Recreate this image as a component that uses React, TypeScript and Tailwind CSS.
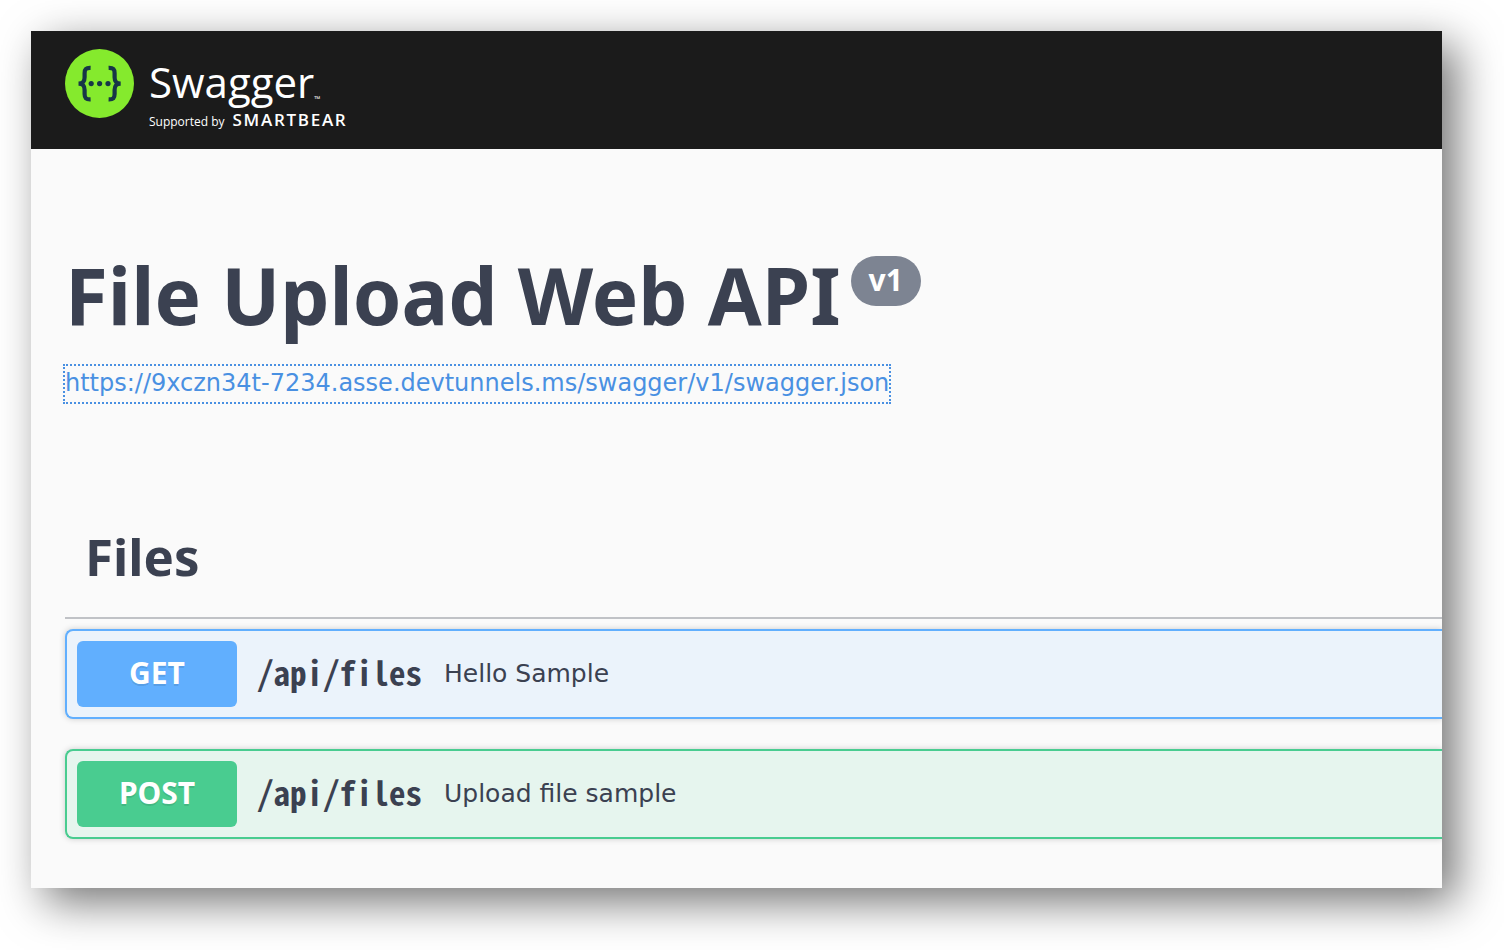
import React from "react";

type Operation = {
  method: string;
  path: string;
  summary: string;
  row: string;
  badge: string;
};

const operations: Operation[] = [
  {
    method: "GET",
    path: "/api/files",
    summary: "Hello Sample",
    row: "border-[#61affe] bg-[#ebf3fb]",
    badge: "bg-[#61affe]",
  },
  {
    method: "POST",
    path: "/api/files",
    summary: "Upload file sample",
    row: "border-[#49cc90] bg-[#e6f5ee]",
    badge: "bg-[#49cc90]",
  },
];

function LogoMark() {
  return (
    <svg className="size-[69px] shrink-0" viewBox="0 0 69 69" aria-hidden="true">
      <circle cx="34.5" cy="34.5" r="34.5" fill="#85ea2d" />
      <g fill="none" stroke="#173647" strokeWidth="4.2">
        <path d="M25.6 18.9 C20.8 18.7 19.6 20.4 19.6 24.2 V28.2 C19.6 32.4 18.3 34.4 13.6 34.6 C18.3 34.8 19.6 36.8 19.6 41 V45 C19.6 48.8 20.8 50.5 25.6 50.3" />
        <path d="M43.6 18.9 C48.4 18.7 49.6 20.4 49.6 24.2 V28.2 C49.6 32.4 50.9 34.4 55.6 34.6 C50.9 34.8 49.6 36.8 49.6 41 V45 C49.6 48.8 48.4 50.5 43.6 50.3" />
      </g>
      <g fill="#173647">
        <circle cx="26.2" cy="34.6" r="2.6" />
        <circle cx="34.6" cy="34.6" r="2.6" />
        <circle cx="43" cy="34.6" r="2.6" />
      </g>
    </svg>
  );
}

function Header() {
  return (
    <header className="bg-[#1b1b1b] px-[34px] pt-[18px] pb-4">
      <a href="#" className="flex w-fit items-start gap-[15px] font-['Open_Sans',sans-serif] text-white">
        <LogoMark />
        <span className="flex flex-col pt-2">
          <span className="flex items-end text-[42px] leading-[50px]">
            Swagger
            <span className="pb-1 text-[8px] leading-[8px]">™</span>
          </span>
          <span className="flex items-baseline gap-2 pt-[2px] leading-[22px]">
            <span className="text-[12px]">Supported by</span>
            <span className="text-[17px] font-semibold tracking-widest">SMARTBEAR</span>
          </span>
        </span>
      </a>
    </header>
  );
}

function OperationRow({ method, path, summary, row, badge }: Operation) {
  return (
    <button
      type="button"
      className={`flex w-full items-center rounded-l-lg border-2 border-r-0 p-[10px] text-left shadow-[0_0_6px_rgba(0,0,0,0.19)] ${row}`}
    >
      <span
        className={`w-40 rounded-md pb-[2px] text-center text-[30px] leading-[64px] font-bold text-white [text-shadow:0_2px_0_rgba(0,0,0,0.1)] ${badge}`}
      >
        {method}
      </span>
      <span className="pr-[22px] pb-1 pl-5 font-['Noto_Sans_CJK_JP',monospace] text-[33px] leading-10 font-bold [font-feature-settings:'hwid'] [font-variant-ligatures:none]">
        {path}
      </span>
      <span className="font-['DejaVu_Sans',sans-serif] text-[25px] leading-10">{summary}</span>
    </button>
  );
}

export default function App() {
  return (
    <div className="min-h-screen overflow-hidden bg-white pt-[31px] pr-[62px] pb-[62px] pl-[31px] font-['Noto_Sans',sans-serif] text-[#3b4151]">
      <div className="shadow-[14px_14px_42px_rgba(0,0,0,0.55)]">
        <div className="overflow-hidden bg-[#fafafa]">
          <Header />
          <main className="pt-[98px] pb-[49px] pl-[34px]">
            <div className="flex items-start gap-[10px]">
              <h1 className="pb-1 text-[78px] leading-[96px] font-bold">File Upload Web API</h1>
              <span className="mt-[9px] rounded-full bg-[#7d8492] px-[18px] pb-[2px] text-[30px] leading-[48px] font-bold text-white">
                v1
              </span>
            </div>
            <a
              href="https://9xczn34t-7234.asse.devtunnels.ms/swagger/v1/swagger.json"
              className="mt-[19px] block w-fit pb-[2px] font-['DejaVu_Sans',sans-serif] text-[24px] leading-[34px] text-[#4990e2] outline-2 outline-dotted outline-[#4990e2]"
            >
              https://9xczn34t-7234.asse.devtunnels.ms/swagger/v1/swagger.json
            </a>
            <section className="mt-[98px]">
              <h2 className="border-b-2 border-[#3b4151]/30 px-5 pt-[21px] pb-[26px] text-[51px] leading-[70px] font-bold">
                Files
              </h2>
              <div className="flex flex-col gap-[30px] pt-[10px]">
                {operations.map((operation) => (
                  <OperationRow key={operation.method} {...operation} />
                ))}
              </div>
            </section>
          </main>
        </div>
      </div>
    </div>
  );
}
